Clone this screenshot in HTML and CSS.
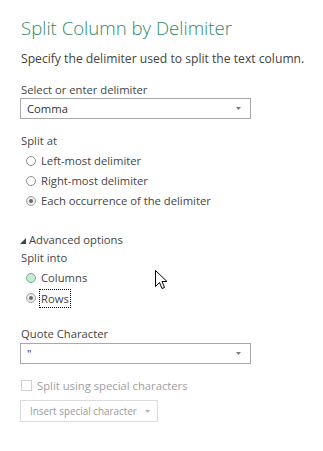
FILE: index.html
```html
<!DOCTYPE html>
<html>
<head>
<meta charset="utf-8">
<link rel="stylesheet" href="styles.css">
</head>
<body>
<div class="dialog">
  <h1 class="title">Split Column by Delimiter</h1>
  <p class="desc">Specify the delimiter used to split the text column.</p>

  <div class="label label-top">Select or enter delimiter</div>
  <div class="select">
    <span class="select-value">Comma</span>
    <svg class="caret" width="5" height="3" viewBox="0 0 5 3"><polygon points="0,0 5,0 2.5,3" fill="#7a7a7a"/></svg>
  </div>

  <div class="label label-split">Split at</div>
  <div class="radios">
    <div class="radio-row"><span class="radio"></span><span class="radio-text">Left-most delimiter</span></div>
    <div class="radio-row"><span class="radio"></span><span class="radio-text">Right-most delimiter</span></div>
    <div class="radio-row"><span class="radio checked"></span><span class="radio-text">Each occurrence of the delimiter</span></div>
  </div>

  <div class="advanced">
    <svg class="tri" width="6" height="6" viewBox="0 0 6 6"><polygon points="6,0 6,6 0,6" fill="#444"/></svg>
    <span>Advanced options</span>
  </div>
  <div class="label label-into">Split into</div>
  <div class="radios">
    <div class="radio-row"><span class="radio hover"></span><span class="radio-text">Columns</span></div>
    <div class="radio-row"><span class="radio checked"></span><span class="radio-text focus">Rows</span></div>
  </div>

  <div class="label label-quote">Quote Character</div>
  <div class="select">
    <span class="select-value">"</span>
    <svg class="caret" width="5" height="3" viewBox="0 0 5 3"><polygon points="0,0 5,0 2.5,3" fill="#7a7a7a"/></svg>
  </div>

  <div class="check-row">
    <span class="checkbox"></span>
    <span class="check-text">Split using special characters</span>
  </div>
  <div class="btn">
    <span class="btn-text">Insert special character</span>
    <svg class="btn-caret" width="5" height="3" viewBox="0 0 5 3"><polygon points="0,0 5,0 2.5,3" fill="#b5b5b5"/></svg>
  </div>

  <svg class="cursor" width="13" height="20" viewBox="0 0 13 20">
    <path d="M0.5 0.5 L0.5 16.5 L4.5 12.5 L7 18.5 L9.5 17.5 L7 11.5 L12 11.5 Z" fill="#fff" stroke="#000" stroke-width="1"/>
  </svg>
</div>
</body>
</html>
```

FILE: styles.css
```css
html, body {
  margin: 0;
  padding: 0;
  background: #ffffff;
}
body {
  font-family: "Open Sans", "Noto Sans", sans-serif;
  font-size: 11.25px;
  color: #444444;
}
.dialog {
  position: relative;
  width: 323px;
  height: 451px;
  box-sizing: border-box;
  padding: 16px 0 0 20px;
}
.title {
  margin: 0;
  font-size: 18.6px;
  font-weight: 300;
  line-height: 24px;
  color: #2f8a69;
  padding-left: 1px;
}
.desc {
  margin: 10px 0 0 0;
  line-height: 18px;
  font-size: 12.15px;
  padding-left: 1px;
}
.label {
  padding-left: 1px;
}
.label-top {
  margin-top: 14px;
  line-height: 16px;
}
.select {
  width: 231px;
  height: 21px;
  box-sizing: border-box;
  border: 1px solid #a9a9a9;
  display: flex;
  align-items: center;
  justify-content: space-between;
  padding: 0 9px 0 6px;
}
.select-value {
  color: #333;
}
.label-split {
  margin-top: 13px;
  line-height: 18px;
}
.radios {
  margin-top: 1px;
  padding-left: 6px;
}
.radio-row {
  height: 20px;
  display: flex;
  align-items: center;
}
.radio {
  width: 10px;
  height: 10px;
  box-sizing: border-box;
  border: 1px solid #8f8f8f;
  border-radius: 50%;
  background: #fff;
  margin-right: 5px;
  position: relative;
  flex: none;
}
.radio.checked {
  border-color: #a0a0a0;
  background: #ececec;
}
.radio.checked::after {
  content: "";
  position: absolute;
  left: 2px;
  top: 2px;
  width: 4px;
  height: 4px;
  border-radius: 50%;
  background: #6b6b6b;
}
.radio.hover {
  border-color: #6fb58a;
  background: #cbe8d5;
}
.radio-text {
  line-height: 16px;
}
.radio-text.focus {
  outline: 1px dotted #000;
  outline-offset: 0;
  padding: 0 1px;
  margin-left: -1px;
  line-height: 17px;
}
.advanced {
  margin-top: 18px;
  height: 20px;
  display: flex;
  align-items: center;
}
.tri {
  margin-right: 3px;
  margin-top: 3px;
}
.label-into {
  line-height: 18px;
}
.label-quote {
  margin-top: 17px;
  line-height: 18px;
}
.check-row {
  margin-top: 12px;
  height: 18px;
  display: flex;
  align-items: center;
  color: #a0a0a0;
}
.checkbox {
  width: 11px;
  height: 11px;
  box-sizing: border-box;
  border: 1px solid #d0d0d0;
  margin: 0 5px 0 1px;
}
.btn {
  margin-top: 6px;
  width: 138px;
  height: 22px;
  box-sizing: border-box;
  border: 1px solid #dcdcdc;
  display: flex;
  align-items: center;
  padding-left: 9px;
  color: #9a9a9a;
  white-space: nowrap;
}
.btn-text {
  font-size: 9.9px;
}
.btn-caret {
  margin-left: 8px;
}
.cursor {
  position: absolute;
  left: 155px;
  top: 270px;
}
```
